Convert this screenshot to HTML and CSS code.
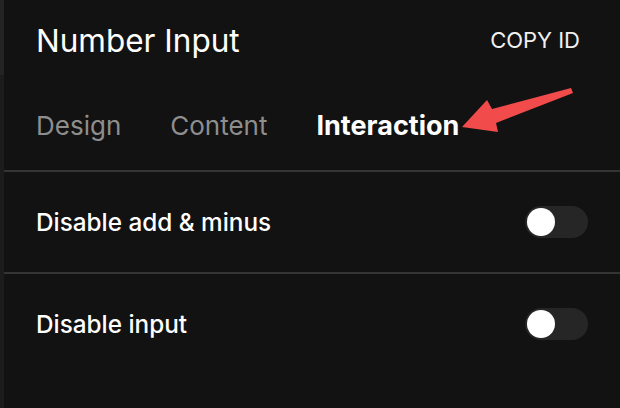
FILE: index.html
```html
<!DOCTYPE html>
<html>
<head>
<meta charset="utf-8">
<link rel="stylesheet" href="styles.css">
</head>
<body>
<div class="edge"></div>
<main class="panel">
  <header class="header">
    <h1 class="title">Number Input</h1>
    <button class="copy">COPY ID</button>
  </header>
  <nav class="tabs">
    <span class="tab">Design</span>
    <span class="tab">Content</span>
    <span class="tab active">Interaction</span>
  </nav>
  <section class="rows">
    <div class="row">
      <span class="label">Disable add &amp; minus</span>
      <span class="switch"><span class="knob"></span></span>
    </div>
    <div class="row">
      <span class="label">Disable input</span>
      <span class="switch"><span class="knob"></span></span>
    </div>
  </section>
</main>
<svg class="arrow" width="620" height="408" viewBox="0 0 620 408">
  <polygon points="462,127 487,100 492,109 571,88 573,93 496,123 498,132" fill="#f24b4b"/>
</svg>
</body>
</html>
```
FILE: styles.css
```css
html, body {
  margin: 0;
  padding: 0;
  height: 100%;
}
body {
  background: #121212;
  display: flex;
  font-family: Inter, "Liberation Sans", sans-serif;
  color: #ffffff;
  overflow: hidden;
}
.edge {
  width: 4px;
  flex: none;
  background: linear-gradient(#242424 0, #242424 75px, #1c1c1c 75px);
}
.panel {
  flex: 1;
  display: flex;
  flex-direction: column;
}
.header {
  height: 80px;
  display: flex;
  align-items: center;
  justify-content: space-between;
  padding: 0 40px 0 32px;
}
.title {
  margin: 0;
  font-size: 31.5px;
  font-weight: 400;
  color: #ffffff;
}
.copy {
  background: none;
  border: none;
  padding: 0;
  font-family: inherit;
  font-size: 22px;
  color: #f0f0f0;
}
.tabs {
  display: flex;
  align-items: center;
  gap: 49px;
  padding-left: 32px;
  border-bottom: 2px solid #343434;
  box-sizing: border-box;
  height: 92px;
}
.tab {
  font-size: 26px;
  color: #8e8e8e;
}
.tab.active {
  color: #ffffff;
  font-size: 27px;
  font-weight: 700;
}
.row {
  height: 100px;
  display: flex;
  align-items: center;
  justify-content: space-between;
  padding: 0 32px 0 32px;
}
.row + .row {
  border-top: 2px solid #343434;
}
.label {
  font-size: 24.3px;
  font-weight: 500;
  color: #ffffff;
}
.switch {
  width: 63px;
  height: 32px;
  border-radius: 16px;
  background: #262626;
  display: flex;
  align-items: center;
  padding: 0 2px;
  box-sizing: border-box;
}
.knob {
  width: 28px;
  height: 28px;
  border-radius: 50%;
  background: #ffffff;
}
.arrow {
  position: absolute;
  left: 0;
  top: 0;
  pointer-events: none;
}
```
